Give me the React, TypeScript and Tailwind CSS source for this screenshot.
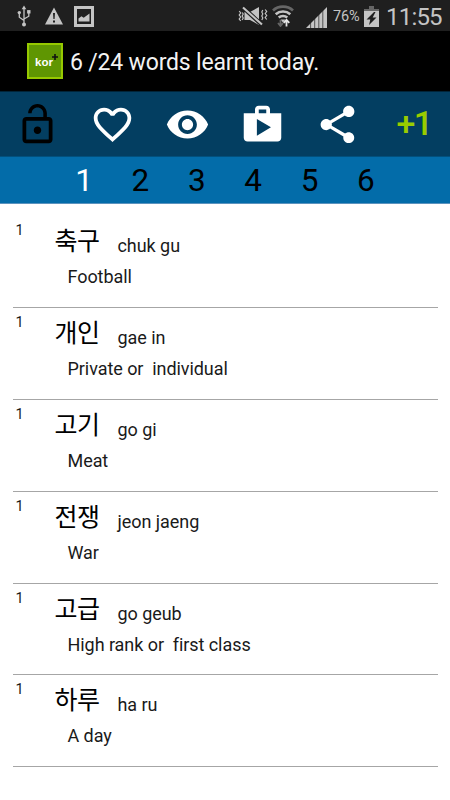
import type { ReactNode } from "react";
import clsx from "clsx";

type Word = {
  hangul: string;
  roman: string;
  meaning: string;
};

const words: Word[] = [
  { hangul: "축구", roman: "chuk gu", meaning: "Football" },
  { hangul: "개인", roman: "gae in", meaning: "Private or  individual" },
  { hangul: "고기", roman: "go gi", meaning: "Meat" },
  { hangul: "전쟁", roman: "jeon jaeng", meaning: "War" },
  { hangul: "고급", roman: "go geub", meaning: "High rank or  first class" },
  { hangul: "하루", roman: "ha ru", meaning: "A day" },
];

const pages = [1, 2, 3, 4, 5, 6];

function StatusBar() {
  return (
    <div className="flex h-[31px] items-center bg-[#1f1f1f] text-[#c4c4c4]">
      {/* usb */}
      <svg className="ml-[17px] h-[22px] w-[14px]" viewBox="0 0 14 22" fill="none" stroke="currentColor" strokeWidth="1.3">
        <path d="M7 3v16M2.3 8v4.2L7 15.5M11.8 7v4.2L7 14" />
        <path d="M7 0.6 9.3 4.2H4.7z" fill="currentColor" stroke="none" />
        <circle cx="7" cy="19.5" r="2" fill="currentColor" stroke="none" />
        <circle cx="2.3" cy="7.6" r="1.7" fill="currentColor" stroke="none" />
        <path d="M10.1 5.1h3.4v3.4h-3.4z" fill="currentColor" stroke="none" />
      </svg>
      {/* warning */}
      <svg className="ml-[13px] h-[18px] w-[20px]" viewBox="0 0 20 18">
        <path d="M10 0.5 19 17.5H1z" fill="currentColor" />
        <path d="M9 6h2l-.4 6H9.4zM9 13.4h2v2H9z" fill="#1f1f1f" />
      </svg>
      {/* picture */}
      <svg className="mt-[1px] ml-[10px] h-[21px] w-[20px]" viewBox="0 0 20 21">
        <path d="M0 0h20v21H0zM3 3v15h14V3z" fill="currentColor" fillRule="evenodd" />
        <path d="M4.5 15.5v-3l3-2.3 2.2 1.5L15.5 7.5v8z" fill="currentColor" />
      </svg>
      {/* vibrate, muted */}
      <svg className="ml-[144px] h-[20px] w-[30px]" viewBox="0 0 30 20">
        <path d="M6.5 6h5.5L21 1v18l-9-5H6.5z" fill="currentColor" />
        <path d="M5 1.5 23 18" stroke="#1f1f1f" strokeWidth="4.2" />
        <path d="M5 1.5 24 18.5" stroke="currentColor" strokeWidth="2.1" />
        <path
          d="M1.2 5l1.5 2-1.5 2 1.5 2-1.5 2 1.5 2M4.2 6.5l1 1.5-1 2 1 2-1 2M24.8 4l-1 2 1 2-1 2 1 2-1 2M27.2 3.5l1.5 2-1.5 2 1.5 2-1.5 2 1.5 2"
          fill="none"
          stroke="currentColor"
          strokeWidth="1.2"
        />
      </svg>
      {/* wifi */}
      <svg className="ml-[4px] h-[22px] w-[22px]" viewBox="0 0 22 22" fill="none">
        <path d="M1 5.5a15 15 0 0 1 20 0" stroke="#666" strokeWidth="2.8" />
        <path d="M3.7 9.2a11 11 0 0 1 14.6 0M6.7 12.6a6.7 6.7 0 0 1 8.6 0" stroke="currentColor" strokeWidth="2.6" />
        <path d="M8.5 14.6h5L11 17.5z" fill="currentColor" />
        <path d="M8.5 15v5.5M6 18l2.5 3 2.5-3" stroke="#666" strokeWidth="1.8" />
        <path d="M14.5 21.5v-6M11.7 17.8l2.8-3 2.8 3" stroke="#e4e4e4" strokeWidth="1.8" />
      </svg>
      {/* signal */}
      <svg className="mt-[3px] ml-[12px] h-[21px] w-[21px]" viewBox="0 0 21 21">
        <path d="M0 21 21 0v21z" fill="currentColor" />
        <path d="M4.6 15v6M8.7 11v10M12.8 7v14M16.8 3v18" stroke="#1f1f1f" strokeWidth="0.7" />
      </svg>
      <span className="mt-[3px] ml-[6px] w-[28px] whitespace-nowrap text-[14.5px] leading-none tracking-[-0.1px]">76%</span>
      {/* battery */}
      <svg className="mt-[1px] ml-[3px] h-[21px] w-[15px]" viewBox="0 0 15 21">
        <path d="M5 0h5v3h5v5H0V3h5z" fill="#666" />
        <path d="M0 5h15v16H0z" fill="currentColor" />
        <path d="M10 6 2.5 13.6h3.8L5 19l7.5-7.6H8.7L11.5 6z" fill="#1f1f1f" />
      </svg>
      <span className="mt-[2px] ml-[7px] whitespace-nowrap text-[24px] leading-none tracking-[-0.8px]">11:55</span>
    </div>
  );
}

function Header() {
  return (
    <header className="flex h-[60px] items-center bg-black pl-[27px]">
      <div className="relative flex h-9 w-9 items-center justify-center border-2 border-[#96c900] bg-[#5f9602]">
        <span className="mt-[4px] mr-[2px] font-['Liberation_Sans'] text-[11.5px] leading-none font-bold text-white">
          kor
        </span>
        <svg className="absolute top-[9px] left-[23px] h-[6px] w-[6px]" viewBox="0 0 6 6">
          <path d="M3 0v6M0 3h6" stroke="#111" strokeWidth="1.6" />
        </svg>
      </div>
      <h1 className="mt-[3px] ml-[7px] whitespace-nowrap text-[23px] leading-none tracking-[-0.18px] text-[#f3f3f3]">
        6 /24 words learnt today.
      </h1>
    </header>
  );
}

function ToolButton({ label, className, children }: { label: string; className?: string; children: ReactNode }) {
  return (
    <button aria-label={label} className={clsx("flex items-center justify-center", className ?? "text-white")}>
      <svg className="size-[45px]" viewBox="0 0 24 24" fill="currentColor">
        {children}
      </svg>
    </button>
  );
}

function Toolbar() {
  return (
    <div className="grid h-[65px] grid-cols-6 border-t border-[#012438] bg-[#033e61]">
      <ToolButton label="Unlock" className="text-black">
        <path d="M12 17c1.1 0 2-.9 2-2s-.9-2-2-2-2 .9-2 2 .9 2 2 2zm6-9h-1V6c0-2.76-2.24-5-5-5S7 3.24 7 6h1.9c0-1.71 1.39-3.1 3.1-3.1 1.71 0 3.1 1.39 3.1 3.1v2H6c-1.1 0-2 .9-2 2v10c0 1.1.9 2 2 2h12c1.1 0 2-.9 2-2V10c0-1.1-.9-2-2-2zm0 12H6V10h12v10z" />
      </ToolButton>
      <ToolButton label="Favourites">
        <path d="M16.5 3c-1.74 0-3.41.81-4.5 2.09C10.91 3.81 9.24 3 7.5 3 4.42 3 2 5.42 2 8.5c0 3.78 3.4 6.86 8.55 11.54L12 21.35l1.45-1.32C18.6 15.36 22 12.28 22 8.5 22 5.42 19.58 3 16.5 3zm-4.4 15.55l-.1.1-.1-.1C7.14 14.24 4 11.39 4 8.5 4 6.5 5.5 5 7.5 5c1.54 0 3.04.99 3.57 2.36h1.87C13.46 5.99 14.96 5 16.5 5c2 0 3.5 1.5 3.5 3.5 0 2.89-3.14 5.74-7.9 10.05z" />
      </ToolButton>
      <ToolButton label="Show">
        <path d="M12 4.5C7 4.5 2.73 7.61 1 12c1.73 4.39 6 7.5 11 7.5s9.27-3.11 11-7.5c-1.73-4.39-6-7.5-11-7.5zM12 17c-2.76 0-5-2.24-5-5s2.24-5 5-5 5 2.24 5 5-2.24 5-5 5zm0-8c-1.66 0-3 1.34-3 3s1.34 3 3 3 3-1.34 3-3-1.34-3-3-3z" />
      </ToolButton>
      <ToolButton label="Store">
        <path d="M16 6V4c0-1.11-.89-2-2-2h-4c-1.11 0-2 .89-2 2v2H2v13c0 1.11.89 2 2 2h16c1.11 0 2-.89 2-2V6h-6zm-6-2h4v2h-4V4zM9 18V9l7.5 4.5L9 18z" />
      </ToolButton>
      <ToolButton label="Share">
        <path d="M18 16.08c-.76 0-1.44.3-1.96.77L8.91 12.7c.05-.23.09-.46.09-.7s-.04-.47-.09-.7l7.05-4.11c.54.5 1.25.81 2.04.81 1.66 0 3-1.34 3-3s-1.34-3-3-3-3 1.34-3 3c0 .24.04.47.09.7L8.04 9.81C7.5 9.31 6.79 9 6 9c-1.66 0-3 1.34-3 3s1.34 3 3 3c.79 0 1.5-.31 2.04-.81l7.12 4.16c-.05.21-.08.43-.08.65 0 1.61 1.31 2.92 2.92 2.92 1.61 0 2.92-1.31 2.92-2.92s-1.31-2.92-2.92-2.92z" />
      </ToolButton>
      <button className="flex items-center justify-center pb-[3px] pl-[3px] text-[34px] leading-none font-medium tracking-[-1.5px] text-[#99cc00]">
        +1
      </button>
    </div>
  );
}

function PageTabs() {
  return (
    <nav className="flex h-12 justify-center border-t border-b border-t-[#02507d] border-b-[#5c93be] bg-[#036ca9]">
      {pages.map((page) => (
        <button
          key={page}
          className={clsx("w-[56.4px] pt-[2px] text-[31.5px] leading-none", page === 1 ? "text-white" : "text-black")}
        >
          {page}
        </button>
      ))}
    </nav>
  );
}

function WordRow({ word }: { word: Word }) {
  return (
    <li className="flex h-[91.9px] border-b border-[#a6a6a6] pt-[5px] pl-[3px] text-[#1a1a1a]">
      <span className="mt-[2px] w-[39px] text-[14.5px] leading-[15px]">1</span>
      <div className="whitespace-pre">
        <div className="flex items-baseline">
          <span className="w-[63px] font-['Noto_Sans_CJK_KR',sans-serif] text-[25px] leading-[36px] tracking-[-0.5px] text-black">
            {word.hangul}
          </span>
          <span className="relative top-[2px] text-[18px] leading-none tracking-[-0.05px]">{word.roman}</span>
        </div>
        <p className="mt-[9px] ml-[13px] text-[18px] leading-[21px] tracking-[-0.06px]">{word.meaning}</p>
      </div>
    </li>
  );
}

export default function App() {
  return (
    <div className="h-[800px] w-[450px] overflow-hidden bg-white font-[Roboto,sans-serif]">
      <StatusBar />
      <Header />
      <Toolbar />
      <PageTabs />
      <ul className="mx-[12.5px] pt-[12px]">
        {words.map((word) => (
          <WordRow key={word.hangul} word={word} />
        ))}
      </ul>
    </div>
  );
}
